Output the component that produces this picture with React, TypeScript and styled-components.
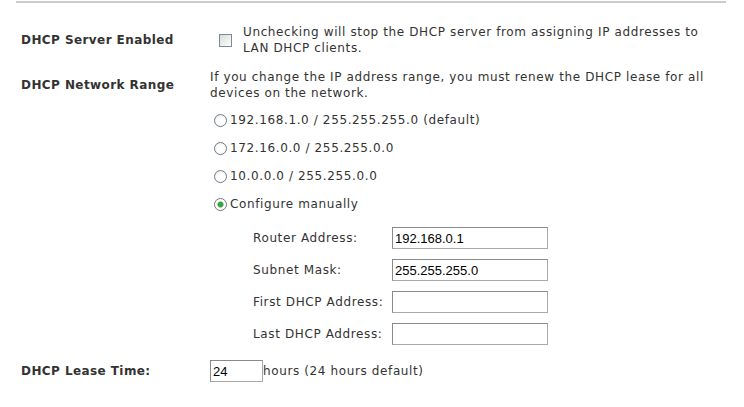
import styled, { createGlobalStyle } from "styled-components";

const GlobalStyle = createGlobalStyle`
  html, body {
    margin: 0;
    padding: 0;
    background: #ffffff;
  }
  body {
    font-family: "DejaVu Sans", Verdana, sans-serif;
    font-size: 12px;
    letter-spacing: 0.62px;
    color: #333333;
  }
`;

const RANGES = [
  { label: "192.168.1.0 / 255.255.255.0 (default)", checked: false },
  { label: "172.16.0.0 / 255.255.0.0", checked: false },
  { label: "10.0.0.0 / 255.255.0.0", checked: false },
  { label: "Configure manually", checked: true },
];

const MANUAL_FIELDS = [
  { label: "Router Address:", value: "192.168.0.1" },
  { label: "Subnet Mask:", value: "255.255.255.0" },
  { label: "First DHCP Address:", value: "" },
  { label: "Last DHCP Address:", value: "" },
];

export default function App() {
  return (
    <Page>
      <GlobalStyle />
      <Divider />
      <Form>
        <Row $top={21}>
          <Label>DHCP Server Enabled</Label>
          <Value>
            <CheckLine>
              <Checkbox type="checkbox" readOnly />
              <Note>
                Unchecking will stop the DHCP server from assigning IP addresses
                to LAN DHCP clients.
              </Note>
            </CheckLine>
          </Value>
        </Row>

        <Row $top={13}>
          <Label>DHCP Network Range</Label>
          <Value>
            <Note>
              If you change the IP address range, you must renew the DHCP lease
              for all devices on the network.
            </Note>
          </Value>
        </Row>

        <Options>
          {RANGES.map((r) => (
            <Option key={r.label}>
              <Radio $checked={r.checked} />
              <span>{r.label}</span>
            </Option>
          ))}
        </Options>

        <Manual>
          {MANUAL_FIELDS.map((f) => (
            <Field key={f.label}>
              <FieldLabel>{f.label}</FieldLabel>
              <TextInput $width={156} defaultValue={f.value} />
            </Field>
          ))}
        </Manual>

        <Row $top={15}>
          <Label>DHCP Lease Time:</Label>
          <LeaseValue>
            <TextInput $width={53} defaultValue="24" />
            <span>hours (24 hours default)</span>
          </LeaseValue>
        </Row>
      </Form>
    </Page>
  );
}

const Page = styled.div`
  width: 710px;
  padding: 1px 0 0 16px;
`;

const Divider = styled.div`
  height: 0;
  border-top: 2px solid #cccccc;
`;

const Form = styled.div`
  display: flex;
  flex-direction: column;
`;

const Row = styled.div<{ $top: number }>`
  display: grid;
  grid-template-columns: 194px 1fr;
  align-items: center;
  margin-top: ${(p) => p.$top}px;
`;

const Label = styled.div`
  padding-left: 5px;
  font-weight: bold;
  letter-spacing: 0.42px;
  color: #333333;
  line-height: 16px;
`;

const Value = styled.div`
  line-height: 16px;
`;

const CheckLine = styled.div`
  display: flex;
  align-items: center;
  padding-left: 9px;
  gap: 11px;
`;

const Note = styled.div`
  line-height: 16px;
`;

const Checkbox = styled.input`
  appearance: none;
  margin: 0;
  width: 13px;
  height: 13px;
  flex: none;
  border: 1px solid #7b8a99;
  background: linear-gradient(135deg, #dcdcd6 0%, #f6f6f4 80%, #ffffff 100%);
  box-sizing: border-box;
`;

const Options = styled.div`
  display: flex;
  flex-direction: column;
  margin: 5px 0 0 194px;
`;

const Option = styled.div`
  display: flex;
  align-items: center;
  height: 28px;
  gap: 3px;
  padding-left: 4px;
`;

const Radio = styled.span<{ $checked: boolean }>`
  width: 13px;
  height: 13px;
  box-sizing: border-box;
  border-radius: 50%;
  border: 1px solid #6e7b8a;
  background: ${(p) =>
    p.$checked
      ? "radial-gradient(circle, #3aa43a 0 2.5px, #ffffff 3.5px)"
      : "radial-gradient(circle at 60% 60%, #ffffff 0 40%, #e4e4e0 100%)"};
`;

const Manual = styled.div`
  display: flex;
  flex-direction: column;
  gap: 10px;
  margin: 9px 0 0 237px;
`;

const Field = styled.div`
  display: grid;
  grid-template-columns: 139px auto;
  align-items: center;
`;

const FieldLabel = styled.span`
  white-space: nowrap;
`;

const TextInput = styled.input<{ $width: number }>`
  width: ${(p) => p.$width}px;
  height: 22px;
  box-sizing: border-box;
  margin: 0;
  padding: 0 2px;
  border: 1px solid #8a8a8a;
  border-color: #8a8a8a #a8a8a8 #a8a8a8 #8a8a8a;
  font-family: "Liberation Sans", Arial, sans-serif;
  font-size: 13px;
  letter-spacing: 0;
  color: #000000;
  background: #ffffff;
  outline: none;
`;

const LeaseValue = styled.div`
  display: flex;
  align-items: center;
  line-height: 16px;
`;
